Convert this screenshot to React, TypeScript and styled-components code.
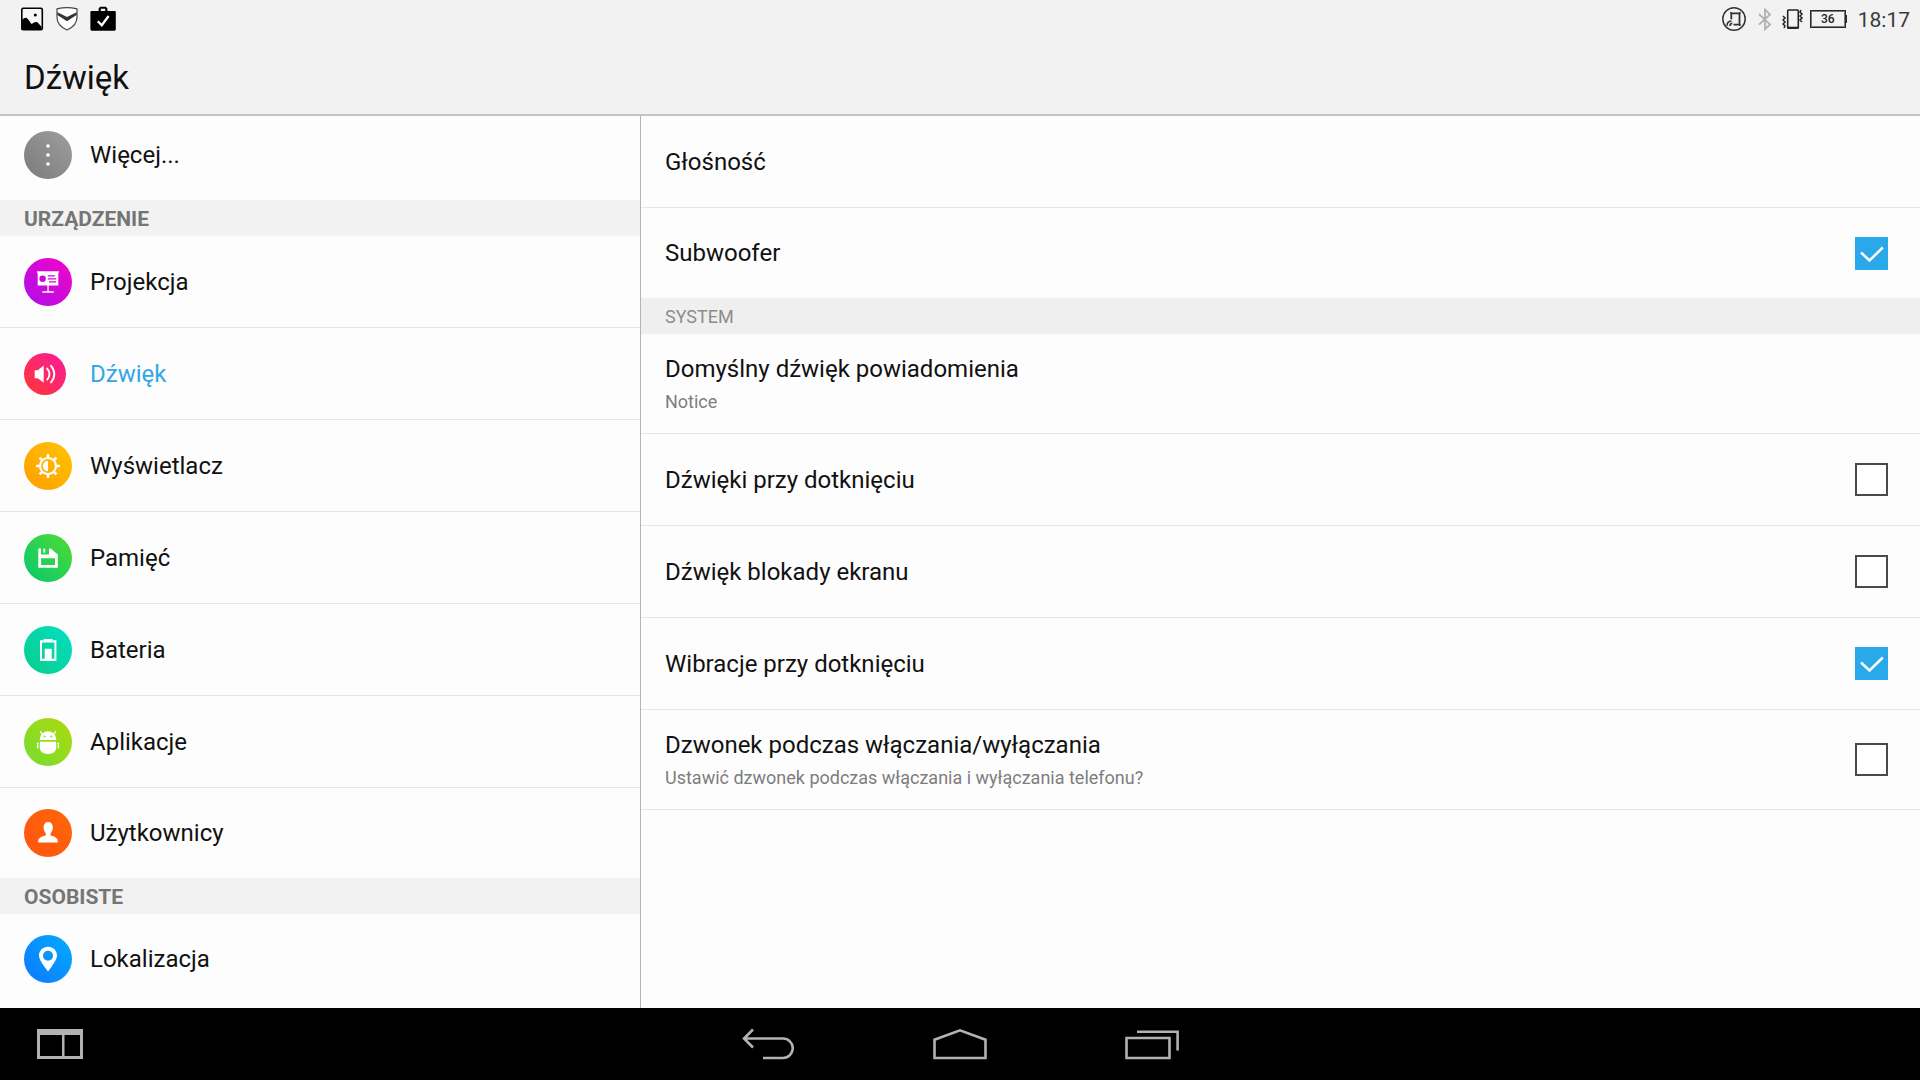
import React, { useState } from 'react';
import styled, { createGlobalStyle, css } from 'styled-components';

const GlobalStyle = createGlobalStyle`
  *, *::before, *::after { box-sizing: border-box; }
  body {
    margin: 0;
    background: #fdfdfd;
    color: #111;
    font-family: Roboto, 'Noto Sans', sans-serif;
  }
`;

const Screen = styled.div`
  display: flex;
  flex-direction: column;
  height: 100vh;
  overflow: hidden;
`;

const Header = styled.header`
  flex: none;
  background: #f2f2f2;
  border-bottom: 2px solid #c4c4c4;
`;

const StatusBar = styled.div`
  display: flex;
  align-items: center;
  justify-content: space-between;
  height: 38px;
  padding: 0 10px 0 20px;
`;

const StatusGroup = styled.div<{ $gap: number }>`
  display: flex;
  align-items: center;
  gap: ${(p) => p.$gap}px;
`;

const Battery = styled.span`
  position: relative;
  display: flex;
  align-items: center;
  justify-content: center;
  width: 36px;
  height: 18px;
  border: 1px solid #2a2a2a;
  outline: 1px solid rgba(42, 42, 42, 0.6);
  outline-offset: -2px;
  font-size: 12px;
  line-height: 16px;
  font-weight: 500;
  color: #222;

  &::after {
    content: '';
    position: absolute;
    left: 100%;
    top: 4px;
    width: 2px;
    height: 8px;
    background: #2a2a2a;
  }
`;

const Clock = styled.time`
  margin-left: 6px;
  padding-top: 2px;
  font-size: 21px;
  line-height: 24px;
  color: #3a3a3a;
`;

const Title = styled.h1`
  margin: 0;
  padding: 4px 24px 0;
  font-size: 33px;
  line-height: 72px;
  font-weight: 400;
`;

const Panes = styled.div`
  flex: 1;
  min-height: 0;
  display: grid;
  grid-template-columns: 1fr 2fr;
`;

const Sidebar = styled.nav`
  overflow: hidden;
`;

const SidebarList = styled.div`
  margin-top: -6px;
`;

const Detail = styled.main`
  overflow: hidden;
  border-left: 1px solid #b4b4b4;
`;

const List = styled.ul`
  margin: 0;
  padding: 0;
  list-style: none;
`;

const Item = styled.li`
  display: grid;
  height: 92px;
  border-bottom: 1px solid #e6e6e6;
`;

const TallItem = styled(Item)`
  height: 100px;
`;

const LastItem = styled.li`
  display: grid;
  height: 90px;
`;

const SectionTitle = styled.h2<{ $strong?: boolean }>`
  margin: 0;
  padding: 2px 24px 0;
  line-height: 34px;
  ${(p) =>
    p.$strong
      ? css`
          background: #f2f2f2;
          color: #757575;
          font-size: 21px;
          font-weight: 700;
        `
      : css`
          background: #efefef;
          color: #8c8c8c;
          font-size: 18px;
          font-weight: 400;
        `}
`;

const CategoryLink = styled.a<{ $active?: boolean }>`
  display: flex;
  align-items: center;
  gap: 18px;
  padding: 0 24px;
  color: ${(p) => (p.$active ? '#33a6e6' : '#111')};
  font-size: 24px;
  text-decoration: none;
`;

const IconSlot = styled.span`
  display: flex;
  flex: none;
  width: 48px;
`;

const rowLayout = css`
  display: flex;
  align-items: center;
  justify-content: space-between;
  width: 100%;
  padding: 0 32px 0 24px;
`;

const PreferenceButton = styled.button`
  ${rowLayout}
  border: 0;
  background: none;
  color: inherit;
  font: inherit;
  text-align: left;
`;

const PreferenceLabel = styled.label`
  ${rowLayout}
`;

const RowText = styled.span<{ $tall?: boolean }>`
  display: flex;
  flex-direction: column;
  padding-bottom: ${(p) => (p.$tall ? 3 : 0)}px;
`;

const RowTitle = styled.span`
  font-size: 24px;
  line-height: 40px;
`;

const RowSummary = styled.span`
  font-size: 18px;
  line-height: 26px;
  color: #7d7d7d;
`;

const CheckStack = styled.span`
  display: grid;
  > * {
    grid-area: 1 / 1;
  }
`;

const Checkbox = styled.input`
  appearance: none;
  width: 33px;
  height: 33px;
  margin: 0;
  border: 2px solid #4a4a4a;
  background: #fff;

  &:checked {
    border-color: #29a9ea;
    background: #29a9ea;
  }
`;

const CheckMark = styled.svg`
  position: relative;
  pointer-events: none;
`;

const NavBar = styled.footer`
  flex: none;
  display: grid;
  grid-template-columns: 1fr auto 1fr;
  height: 72px;
  background: #000;
`;

const NavCenter = styled.div`
  display: flex;
`;

const NavButton = styled.button<{ $width: number }>`
  display: flex;
  align-items: center;
  justify-content: center;
  width: ${(p) => p.$width}px;
  height: 72px;
  padding: 0;
  border: 0;
  background: none;
  color: #b2b2b2;
`;

type BadgeProps = {
  id: string;
  from: string;
  to: string;
  size?: number;
  children: React.ReactNode;
};

function Badge({ id, from, to, size = 48, children }: BadgeProps) {
  return (
    <svg width={size} height={size} viewBox={`0 0 ${size} ${size}`} aria-hidden="true">
      <defs>
        <linearGradient id={id} x1="0.15" y1="0.85" x2="0.85" y2="0.15">
          <stop offset="0" stopColor={from} />
          <stop offset="1" stopColor={to} />
        </linearGradient>
      </defs>
      <circle cx={size / 2} cy={size / 2} r={size / 2} fill={`url(#${id})`} />
      {children}
    </svg>
  );
}

const MoreIcon = () => (
  <Badge id="more" from="#808080" to="#999">
    <g fill="#fff">
      <circle cx="24" cy="15" r="1.8" />
      <circle cx="24" cy="24" r="1.8" />
      <circle cx="24" cy="33" r="1.8" />
    </g>
  </Badge>
);

const ProjectionIcon = () => (
  <Badge id="projection" from="#b80de4" to="#ea05cb">
    <path fill="#fff" d="M13 13.3h22v1.5h-.7v12.800H24.700v5.600h5.100v1.600H18.300v-1.600h5.100v-5.600H13.700V14.800H13z" />
    <circle cx="18.600" cy="20.800" r="3.200" fill="#cc08d8" />
    <path stroke="#d607d4" strokeWidth="1.300" d="M23.800 17.800h7M23.800 20.800h8.400M25 23.800h7.200" />
  </Badge>
);

const SoundIcon = () => (
  <Badge id="sound" from="#ff3340" to="#fa1f8c" size={42}>
    <path fill="#fff" d="M10.700 17.200h3l6-4.600v17.200l-6-4.600h-3z" />
    <g fill="none" stroke="#fff" strokeWidth="1.900" strokeLinecap="round">
      <path d="M23.200 15.600c3 3.200 3 7.800 0 11" />
      <path d="M27 12.800c4.400 4.800 4.400 11.800 0 16.600" />
    </g>
  </Badge>
);

const DisplayIcon = () => (
  <Badge id="display" from="#ffa200" to="#ffbf00">
    <circle cx="24" cy="24" r="8" fill="none" stroke="#fff" strokeWidth="2.200" />
    <g stroke="#fff" strokeWidth="2.600">
      {[0, 45, 90, 135, 180, 225, 270, 315].map((a) => (
        <path key={a} d="M24 15.500v-3.400" transform={`rotate(${a} 24 24)`} />
      ))}
    </g>
    <path fill="#fff" d="M24 18.800v10.400a5.200 5.200 0 0 1 0-10.400z" />
  </Badge>
);

const StorageIcon = () => (
  <Badge id="storage" from="#10cc66" to="#46d83c">
    <path
      fill="#fff"
      fillRule="evenodd"
      d="M14.300 14.600H17v6h8v-6h1.800l7 5.800v13.400H14.300zM17.100 24.300v6.800H31v-6.800z"
    />
    <path fill="#fff" d="M19.300 14.600h1.900v4h-1.900z" />
  </Badge>
);

const BatteryIcon = () => (
  <Badge id="battery" from="#08cf92" to="#04dcbc">
    <path
      fill="#fff"
      fillRule="evenodd"
      d="M19.700 13h9v1.200h3.700V35H16V14.200h3.700zM18 16.400v16.400h2.700V22.700h7v10.100h2.700V16.400z"
    />
  </Badge>
);

const AppsIcon = () => (
  <Badge id="apps" from="#7ddc2c" to="#a6da12">
    <g fill="#fff">
      <path d="M15.800 22c0-5 3.400-8.700 8.200-8.700s8.200 3.700 8.200 8.700z" />
      <path d="M15.800 23.700h16.400v6c0 3.800-3.200 6.200-8.200 6.200s-8.200-2.400-8.200-6.200z" />
      <rect x="12.900" y="24.500" width="1.500" height="6" rx=".7" />
      <rect x="33.600" y="24.500" width="1.500" height="6" rx=".7" />
    </g>
    <path stroke="#fff" strokeWidth="1.300" strokeLinecap="round" d="M18.200 16.500l-1.700-3M29.800 16.500l1.700-3" />
    <g fill="#93db1f">
      <circle cx="20.700" cy="18.500" r="1" />
      <circle cx="27.200" cy="18.500" r="1" />
    </g>
  </Badge>
);

const UsersIcon = () => (
  <Badge id="users" from="#ff5710" to="#ff6408">
    <path
      fill="#fff"
      d="M24.200 13c2.900 0 4.600 2 4.600 5 0 2.600-.9 4.900-2.200 6.200v2.300c3.800.9 7.200 2.500 7.200 5.400v1.600H14.200v-1.600c0-2.900 3.600-4.500 7.600-5.400v-2.300c-1.300-1.300-2.200-3.600-2.200-6.200 0-3 1.700-5 4.600-5z"
    />
  </Badge>
);

const LocationIcon = () => (
  <Badge id="location" from="#0b80ff" to="#04a4ff">
    <path
      fill="#fff"
      fillRule="evenodd"
      d="M24 11.700c5.200 0 9 3.900 9 8.900 0 3.500-3.200 7.800-5.400 11.100L24 36.500l-3.600-4.800C18.200 28.400 15 24.100 15 20.600c0-5 3.800-8.900 9-8.900zm0 4a5 5 0 1 0 0 10 5 5 0 0 0 0-10z"
    />
  </Badge>
);

const PictureIcon = () => (
  <svg width="24" height="24" viewBox="0 0 24 24" aria-hidden="true">
    <rect x="1.800" y="1.200" width="20.500" height="21.500" rx="1.500" fill="#f8f8f8" stroke="#000" strokeWidth="1.600" />
    <path d="M1.500 13.500l2.400-2.300 2.200-.4 1.800 1.300 3.600 5 3.600-2.100 2.400.3 4 4.500V23H1.500z" />
    <circle cx="15.300" cy="8" r="1.500" />
  </svg>
);

const ShieldIcon = () => (
  <svg width="22" height="24" viewBox="0 0 22 24" aria-hidden="true">
    <path
      fill="#fff"
      stroke="#444"
      strokeWidth="1.200"
      d="M1 1.900C7 .4 15 .4 21 1.900V10c0 6-4 10.500-10 13C5 20.500 1 16 1 10z"
    />
    <path fill="#333" d="M1.400 5.300L11 10l9.600-4.700v2.700L11 14.300 1.400 8z" />
  </svg>
);

const StoreIcon = () => (
  <svg width="26" height="26" viewBox="0 0 26 26" aria-hidden="true">
    <path
      fillRule="evenodd"
      d="M8.600 5V2.400L10.200.8h5.600l1.600 1.600V5h7.200c.7 0 1.200.5 1.200 1.200V23c0 .9-.9 1.800-1.800 1.800H2.200c-1 0-1.800-.9-1.800-1.800V6.200C.4 5.500.9 5 1.600 5zm2.200 0h4.400V2.800h-4.400z"
    />
    <path fill="none" stroke="#fff" strokeWidth="2.300" d="M7.800 15.200l4 4L18.600 10" />
  </svg>
);

const RotationIcon = () => (
  <svg width="26" height="24" viewBox="0 0 26 24" fill="none" stroke="#333" aria-hidden="true">
    <circle cx="12" cy="12" r="11.200" strokeWidth="1.500" />
    <path strokeWidth="1.800" d="M9.300 12.200V6.300h8.200v11.400H11.500" />
    <path strokeWidth="1.300" d="M8 5.800h2M17 5.800h1.800M17 18h1.800" />
    <path strokeWidth="1.600" d="M5 18.800c0-3 1.500-4.600 4.500-4.800M8 19c0-1.600.7-2.500 2.300-2.600" />
  </svg>
);

const BluetoothIcon = () => (
  <svg width="22" height="24" viewBox="-4 0 22 24" fill="none" stroke="#b0b0b0" strokeWidth="1.800" aria-hidden="true">
    <path d="M1 7.200l11 10.200-5 4.800V2.600l5 4.800L1 17.600" />
  </svg>
);

const VibrateIcon = () => (
  <svg width="22" height="24" viewBox="0 0 22 24" fill="none" stroke="#222" aria-hidden="true">
    <rect x="5.700" y="3" width="10.600" height="18" rx=".8" strokeWidth="1.600" />
    <path strokeWidth="2.200" d="M5.500 20.800h11" />
    <path strokeWidth="1.500" d="M1 9l2 2-2 2 2 2-2 2 2 2-1 2M19 3l-1 2 2 2-2 2 2 2-2 2 2 2" />
  </svg>
);

const SplitIcon = () => (
  <svg width="46" height="30" viewBox="0 0 46 30" aria-hidden="true">
    <path fill="currentColor" fillRule="evenodd" d="M0 0h46v30H0zM3 6v21h22V6zM27.500 6v21H43V6z" />
  </svg>
);

const BackIcon = () => (
  <svg width="52" height="32" viewBox="0 0 52 32" fill="none" stroke="currentColor" strokeWidth="2.600" aria-hidden="true">
    <path d="M11 1.500L2 10.500l9 9M2 10.500h39a9.750 9.750 0 0 1 0 19.500H21" />
  </svg>
);

const HomeIcon = () => (
  <svg width="54" height="32" viewBox="0 0 54 32" fill="none" stroke="currentColor" strokeWidth="2.600" aria-hidden="true">
    <path d="M1.500 30V11.700L27 2.400l25.500 9.300V30z" />
  </svg>
);

const RecentsIcon = () => (
  <svg width="54" height="32" viewBox="0 0 54 32" fill="none" stroke="currentColor" strokeWidth="2.600" aria-hidden="true">
    <path d="M1.500 10h43v20h-43zM12 3.800h40.600v18.700" />
  </svg>
);

type Category = { name: string; slug: string; Icon: () => React.ReactElement; active?: boolean };

const deviceCategories: Category[] = [
  { name: 'Projekcja', slug: 'projekcja', Icon: ProjectionIcon },
  { name: 'Dźwięk', slug: 'dzwiek', Icon: SoundIcon, active: true },
  { name: 'Wyświetlacz', slug: 'wyswietlacz', Icon: DisplayIcon },
  { name: 'Pamięć', slug: 'pamiec', Icon: StorageIcon },
  { name: 'Bateria', slug: 'bateria', Icon: BatteryIcon },
  { name: 'Aplikacje', slug: 'aplikacje', Icon: AppsIcon },
  { name: 'Użytkownicy', slug: 'uzytkownicy', Icon: UsersIcon },
];

function CategoryList({ items }: { items: Category[] }) {
  return (
    <List>
      {items.map(({ name, slug, Icon, active }, i) => {
        const Row = i === items.length - 1 ? LastItem : Item;
        return (
          <Row key={slug}>
            <CategoryLink href={`#${slug}`} $active={active} aria-current={active ? 'page' : undefined}>
              <IconSlot>
                <Icon />
              </IconSlot>
              {name}
            </CategoryLink>
          </Row>
        );
      })}
    </List>
  );
}

function PreferenceText({ title, summary }: { title: string; summary?: string }) {
  return (
    <RowText $tall={!!summary}>
      <RowTitle>{title}</RowTitle>
      {summary && <RowSummary>{summary}</RowSummary>}
    </RowText>
  );
}

function Preference({ title, summary }: { title: string; summary?: string }) {
  return (
    <PreferenceButton type="button">
      <PreferenceText title={title} summary={summary} />
    </PreferenceButton>
  );
}

type TogglePreferenceProps = { id: string; title: string; summary?: string; initial?: boolean };

function TogglePreference({ id, title, summary, initial = false }: TogglePreferenceProps) {
  const [checked, setChecked] = useState(initial);
  return (
    <PreferenceLabel htmlFor={id}>
      <PreferenceText title={title} summary={summary} />
      <CheckStack>
        <Checkbox id={id} type="checkbox" checked={checked} onChange={(e) => setChecked(e.target.checked)} />
        {checked && (
          <CheckMark width="33" height="33" viewBox="0 0 33 33" aria-hidden="true">
            <path d="M6 15.500l8.500 8L27.800 10.500" fill="none" stroke="#fff" strokeWidth="2.500" />
          </CheckMark>
        )}
      </CheckStack>
    </PreferenceLabel>
  );
}

export default function App() {
  return (
    <Screen>
      <GlobalStyle />
      <Header>
        <StatusBar>
          <StatusGroup $gap={12}>
            <PictureIcon />
            <ShieldIcon />
            <StoreIcon />
          </StatusGroup>
          <StatusGroup $gap={6}>
            <RotationIcon />
            <BluetoothIcon />
            <VibrateIcon />
            <Battery>36</Battery>
            <Clock>18:17</Clock>
          </StatusGroup>
        </StatusBar>
        <Title>Dźwięk</Title>
      </Header>
      <Panes>
        <Sidebar>
          <SidebarList>
            <CategoryList items={[{ name: 'Więcej...', slug: 'wiecej', Icon: MoreIcon }]} />
            <SectionTitle $strong>URZĄDZENIE</SectionTitle>
            <CategoryList items={deviceCategories} />
            <SectionTitle $strong>OSOBISTE</SectionTitle>
            <CategoryList items={[{ name: 'Lokalizacja', slug: 'lokalizacja', Icon: LocationIcon }]} />
          </SidebarList>
        </Sidebar>
        <Detail>
          <List>
            <Item>
              <Preference title="Głośność" />
            </Item>
            <LastItem>
              <TogglePreference id="subwoofer" title="Subwoofer" initial />
            </LastItem>
          </List>
          <SectionTitle>SYSTEM</SectionTitle>
          <List>
            <TallItem>
              <Preference title="Domyślny dźwięk powiadomienia" summary="Notice" />
            </TallItem>
            <Item>
              <TogglePreference id="touch-sounds" title="Dźwięki przy dotknięciu" />
            </Item>
            <Item>
              <TogglePreference id="lock-sound" title="Dźwięk blokady ekranu" />
            </Item>
            <Item>
              <TogglePreference id="touch-vibration" title="Wibracje przy dotknięciu" initial />
            </Item>
            <TallItem>
              <TogglePreference
                id="power-chime"
                title="Dzwonek podczas włączania/wyłączania"
                summary="Ustawić dzwonek podczas włączania i wyłączania telefonu?"
              />
            </TallItem>
          </List>
        </Detail>
      </Panes>
      <NavBar>
        <NavButton type="button" aria-label="Podziel ekran" $width={120}>
          <SplitIcon />
        </NavButton>
        <NavCenter>
          <NavButton type="button" aria-label="Wstecz" $width={192}>
            <BackIcon />
          </NavButton>
          <NavButton type="button" aria-label="Ekran główny" $width={192}>
            <HomeIcon />
          </NavButton>
          <NavButton type="button" aria-label="Ostatnie" $width={192}>
            <RecentsIcon />
          </NavButton>
        </NavCenter>
      </NavBar>
    </Screen>
  );
}
